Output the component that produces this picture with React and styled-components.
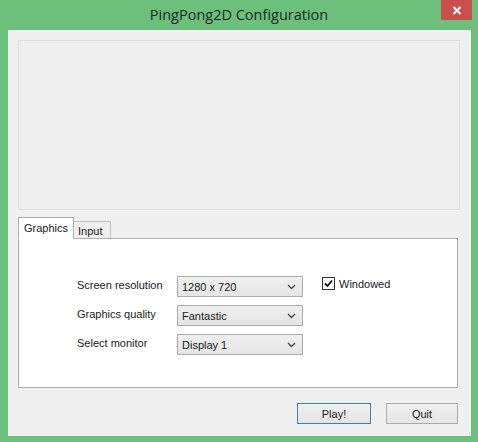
import React from "react";
import styled, { createGlobalStyle } from "styled-components";

const Global = createGlobalStyle`
  html, body { margin: 0; padding: 0; }
  body { width: 478px; height: 442px; overflow: hidden; background: #6cc07c; }
`;

const Window = styled.div`
  width: 478px;
  height: 442px;
  background: #6cc07c;
  display: flex;
  flex-direction: column;
  font-family: "Liberation Sans", Arial, sans-serif;
  font-size: 11px;
  color: #1a1a1a;
`;

const TitleBar = styled.div`
  position: relative;
  height: 30px;
  flex: none;
  display: flex;
  align-items: center;
  justify-content: center;
`;

const Title = styled.span`
  font-family: "Open Sans", "Noto Sans", sans-serif;
  font-size: 14.5px;
  color: #1b2a1e;
  margin-top: -1px;
`;

const CloseButton = styled.div`
  position: absolute;
  top: 0;
  right: 6px;
  width: 31px;
  height: 20px;
  background: #c94f4f;
  display: flex;
  align-items: center;
  justify-content: center;
`;

const Client = styled.div`
  margin: 0 7px 6px 8px;
  flex: 1;
  background: #f0f0f0;
  display: flex;
  flex-direction: column;
  padding: 10px 11px 0 10px;
  box-sizing: border-box;
`;

const Preview = styled.div`
  height: 170px;
  box-sizing: border-box;
  border: 1px solid #dcdcdc;
  background: #efefef;
`;

const TabStrip = styled.div`
  margin-top: 6px;
  display: flex;
  align-items: flex-end;
  height: 22px;
  position: relative;
  z-index: 1;
`;

const Tab = styled.div`
  box-sizing: border-box;
  height: ${(p) => (p.$active ? "22px" : "17px")};
  padding: 0 ${(p) => (p.$active ? "5px" : "7px")} 0 ${(p) => (p.$active ? "5px" : "4px")};
  border: 1px solid ${(p) => (p.$active ? "#adadad" : "#c4c4c4")};
  border-bottom: ${(p) => (p.$active ? "1px solid #ffffff" : "none")};
  ${(p) => (p.$active ? "" : "border-left: none;")}
  background: ${(p) => (p.$active ? "#ffffff" : "#f0f0f0")};
  display: flex;
  align-items: ${(p) => (p.$active ? "flex-start" : "center")};
  padding-top: ${(p) => (p.$active ? "4px" : "1px")};
  margin-bottom: ${(p) => (p.$active ? "-1px" : "0")};
`;

const TabPanel = styled.div`
  margin-right: 2px;
  height: 150px;
  box-sizing: border-box;
  border: 1px solid #adadad;
  background: #ffffff;
  position: relative;
  padding: 37px 0 0 58px;
  display: flex;
  align-items: flex-start;
`;

const Form = styled.div`
  display: grid;
  grid-template-columns: 100px 126px;
  row-gap: 8px;
  align-items: center;
`;

const Label = styled.span`
  margin-top: -4px;
`;

const Select = styled.div`
  box-sizing: border-box;
  height: 21px;
  border: 1px solid #acacac;
  background: linear-gradient(#f0f0f0, #e5e5e5);
  display: flex;
  align-items: center;
  justify-content: space-between;
  padding: 0 6px 0 4px;
`;

const Check = styled.label`
  display: flex;
  align-items: center;
  gap: 4px;
  margin-left: 19px;
  margin-top: 1px;
`;

const Box = styled.span`
  width: 11px;
  height: 11px;
  border: 1px solid #333333;
  background: #ffffff;
  display: flex;
  align-items: center;
  justify-content: center;
`;

const Buttons = styled.div`
  margin-top: 15px;
  margin-right: 2px;
  display: flex;
  justify-content: flex-end;
  gap: 15px;
`;

const Button = styled.div`
  box-sizing: border-box;
  width: ${(p) => (p.$wide ? "74px" : "72px")};
  height: 21px;
  border: 1px solid ${(p) => (p.$default ? "#3c7fb1" : "#acacac")};
  background: linear-gradient(#f0f0f0, #e5e5e5);
  display: flex;
  align-items: center;
  justify-content: center;
`;

const Chevron = () => (
  <svg width="9" height="6" viewBox="0 0 9 6">
    <path d="M1 1 L4.5 4.5 L8 1" fill="none" stroke="#444" strokeWidth="1.3" />
  </svg>
);

const Dropdown = ({ value }) => (
  <Select>
    <span>{value}</span>
    <Chevron />
  </Select>
);

export default function App() {
  return (
    <Window>
      <Global />
      <TitleBar>
        <Title>PingPong2D Configuration</Title>
        <CloseButton>
          <svg width="10" height="9" viewBox="0 0 10 9">
            <path d="M1.5 1 L8.5 8 M8.5 1 L1.5 8" stroke="#ffffff" strokeWidth="2" />
          </svg>
        </CloseButton>
      </TitleBar>
      <Client>
        <Preview />
        <TabStrip>
          <Tab $active>Graphics</Tab>
          <Tab>Input</Tab>
        </TabStrip>
        <TabPanel>
          <Form>
            <Label>Screen resolution</Label>
            <Dropdown value="1280 x 720" />
            <Label>Graphics quality</Label>
            <Dropdown value="Fantastic" />
            <Label>Select monitor</Label>
            <Dropdown value="Display 1" />
          </Form>
          <Check>
            <Box>
              <svg width="9" height="9" viewBox="0 0 9 9">
                <path d="M1 4.5 L3.5 7 L8 1.5" fill="none" stroke="#111" strokeWidth="1.8" />
              </svg>
            </Box>
            Windowed
          </Check>
        </TabPanel>
        <Buttons>
          <Button $default $wide>Play!</Button>
          <Button>Quit</Button>
        </Buttons>
      </Client>
    </Window>
  );
}
